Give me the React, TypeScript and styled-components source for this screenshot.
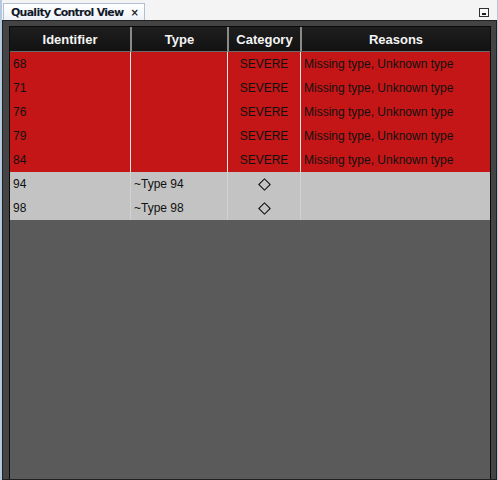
import React from "react";
import styled, { createGlobalStyle } from "styled-components";

const Global = createGlobalStyle`
  html, body { margin: 0; padding: 0; background: #f4f4f4; }
  #root { width: 498px; height: 480px; }
`;

const View = styled.div`
  width: 498px;
  height: 480px;
  box-sizing: border-box;
  display: flex;
  flex-direction: column;
  background: #f4f4f4;
  border-left: 2px solid #b4c8dc;
  border-right: 1px solid #b4c8dc;
  font-family: "Liberation Sans", Arial, sans-serif;
`;

const TabStrip = styled.div`
  height: 20px;
  display: flex;
  align-items: flex-end;
  justify-content: space-between;
  padding-left: 1px;
  padding-right: 8px;
`;

const Tab = styled.div`
  height: 17px;
  box-sizing: border-box;
  padding: 0 5px 0 7px;
  display: flex;
  align-items: center;
  gap: 7px;
  background: linear-gradient(#ffffff, #eef2f8);
  border: 1px solid #b0c0d4;
  border-bottom: none;
  font-family: "DejaVu Sans", sans-serif;
  font-weight: bold;
  font-size: 11px;
  letter-spacing: -0.75px;
  color: #101828;
`;

const Close = styled.span`
  font-size: 10px;
  letter-spacing: 0;
  color: #202020;
`;

const Minimize = styled.div`
  width: 8px;
  height: 7px;
  margin-bottom: 3px;
  border: 1px solid #303030;
  background: #f8f8f8;
  position: relative;
  &::after {
    content: "";
    position: absolute;
    left: 2px;
    right: 2px;
    bottom: 1px;
    height: 2px;
    background: #202020;
  }
`;

const Frame = styled.div`
  flex: 1;
  background: #444444;
  border: 1px solid #202020;
  padding: 5px 5px 0 6px;
  display: flex;
  flex-direction: column;
`;

const TableArea = styled.div`
  flex: 1;
  background: #5a5a5a;
  border: 1px solid #0a0a0a;
  border-bottom: none;
`;

const Grid = styled.div`
  display: grid;
  grid-template-columns: 120px 97px 73px 1fr;
`;

const HeaderCell = styled.div<{ $first?: boolean }>`
  height: 25px;
  box-sizing: border-box;
  display: flex;
  align-items: center;
  justify-content: center;
  background: linear-gradient(#1e1e1e, #121212);
  border-left: ${(p) => (p.$first ? "none" : "2px solid #8a8a8a")};
  border-bottom: 1px solid #6a6a6a;
  color: #f4f4f4;
  font-weight: bold;
  font-size: 13px;
`;

const Cell = styled.div<{ $severe?: boolean; $first?: boolean; $center?: boolean }>`
  height: 24px;
  box-sizing: border-box;
  display: flex;
  align-items: center;
  justify-content: ${(p) => (p.$center ? "center" : "flex-start")};
  padding-left: ${(p) => (p.$center ? "0" : "3px")};
  background: ${(p) => (p.$severe ? "#c41616" : "#c3c3c3")};
  border-left: ${(p) =>
    p.$first ? "none" : p.$severe ? "1px solid #e8e8e8" : "1px solid #d2d2d2"};
  color: #111111;
  font-size: 12px;
  white-space: nowrap;
`;

const Diamond = styled.span`
  width: 7px;
  height: 7px;
  border: 1px solid #000;
  transform: rotate(45deg);
  margin-top: 1px;
`;

type Row = { id: string; type: string; severe: boolean; reasons: string };

const rows: Row[] = [
  { id: "68", type: "", severe: true, reasons: "Missing type, Unknown type" },
  { id: "71", type: "", severe: true, reasons: "Missing type, Unknown type" },
  { id: "76", type: "", severe: true, reasons: "Missing type, Unknown type" },
  { id: "79", type: "", severe: true, reasons: "Missing type, Unknown type" },
  { id: "84", type: "", severe: true, reasons: "Missing type, Unknown type" },
  { id: "94", type: "~Type 94", severe: false, reasons: "" },
  { id: "98", type: "~Type 98", severe: false, reasons: "" },
];

export default function App() {
  return (
    <>
      <Global />
      <View>
        <TabStrip>
          <Tab>
            Quality Control View <Close>×</Close>
          </Tab>
          <Minimize />
        </TabStrip>
        <Frame>
          <TableArea>
            <Grid>
              <HeaderCell $first>Identifier</HeaderCell>
              <HeaderCell>Type</HeaderCell>
              <HeaderCell>Category</HeaderCell>
              <HeaderCell>Reasons</HeaderCell>
              {rows.map((r) => (
                <React.Fragment key={r.id}>
                  <Cell $first $severe={r.severe}>{r.id}</Cell>
                  <Cell $severe={r.severe}>{r.type}</Cell>
                  <Cell $severe={r.severe} $center>
                    {r.severe ? "SEVERE" : <Diamond />}
                  </Cell>
                  <Cell $severe={r.severe}>{r.reasons}</Cell>
                </React.Fragment>
              ))}
            </Grid>
          </TableArea>
        </Frame>
      </View>
    </>
  );
}
